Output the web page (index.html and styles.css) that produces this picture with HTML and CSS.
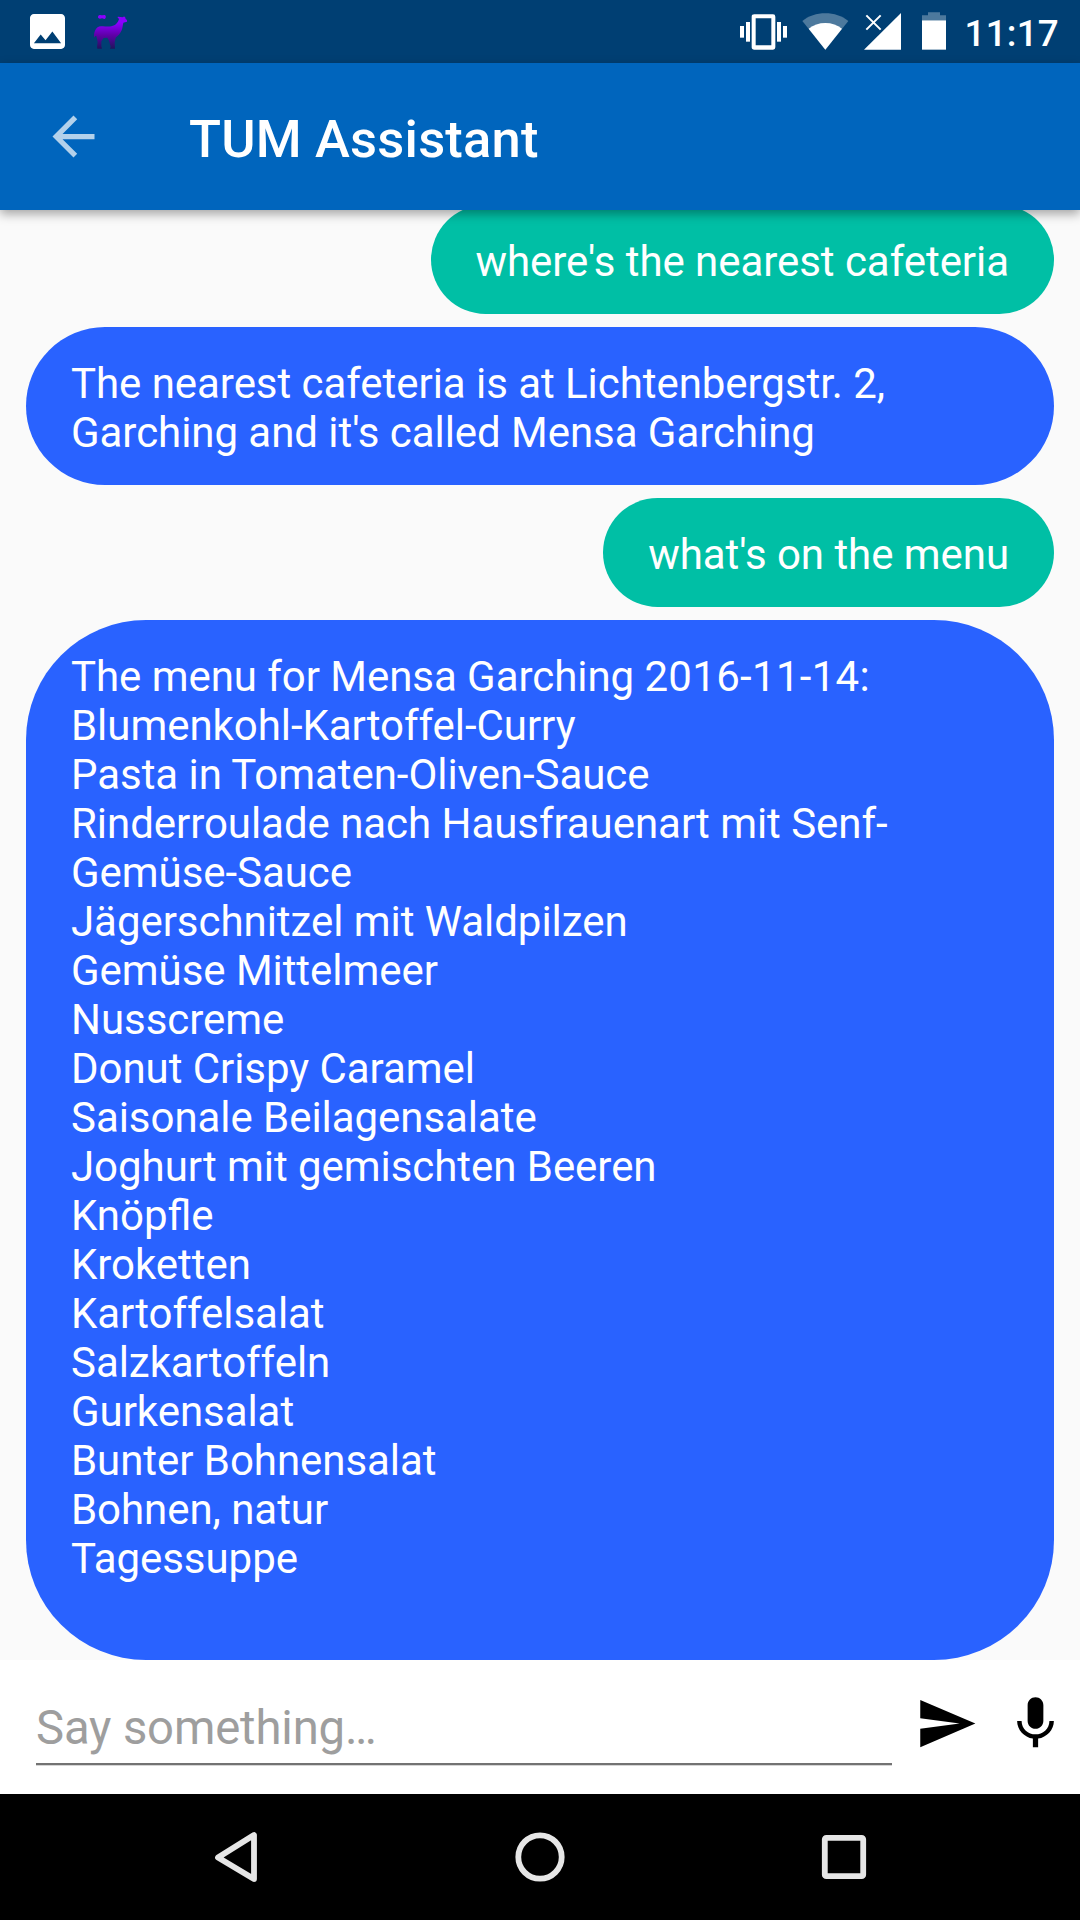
FILE: index.html
```html
<!DOCTYPE html>
<html lang="en">
<head>
    <meta charset="UTF-8">
    <title>TUM Assistant</title>
    <link rel="stylesheet" href="styles.css">
</head>
<body>
    <div class="status-bar">
        <div class="notifications">
            <svg width="35" height="35" viewBox="3 3 18 18" fill="#fff"><path d="M21 19V5c0-1.1-.9-2-2-2H5c-1.1 0-2 .9-2 2v14c0 1.1.9 2 2 2h14c1.1 0 2-.9 2-2zM8.5 13.5l2.5 3.01L14.5 12l4.5 6H5l3.5-4.5z"/></svg>
            <svg width="36" height="36" viewBox="0 0 108 108">
                <defs>
                    <linearGradient id="llama" gradientUnits="userSpaceOnUse" x1="0" y1="0" x2="0" y2="106">
                        <stop offset="0.25" stop-color="#8b00ff"/>
                        <stop offset="0.6" stop-color="#5f00a8"/>
                        <stop offset="1" stop-color="#1c1558"/>
                    </linearGradient>
                </defs>
                <g fill="url(#llama)">
                    <path d="M20 3c3-1 5 1 7 1s4-2 8-1 5 9 1 11-6-1-9-1-6 2-10 0-2-9 3-10z"/>
                    <path d="M3 72C2 54 8 38 24 37c10-1 20 2 31 0 14-3 20-12 23-22l-5-6 3-1 13 2 2-2h5l2 7 4 3v5l-11 3c-2 8-2 15-5 23-4 10-12 18-18 22l-3 14 1 19H51l2-6-5-18-5-9-11 1-7 10 0 14 2 8H13l-1-6 2-14-4-18-4 1z"/>
                </g>
            </svg>
        </div>
        <div class="system-icons">
            <svg class="vibrate" width="47" height="36" viewBox="60 41 141 108" fill="#fff">
                <rect x="60" y="77" width="12" height="35"/>
                <rect x="78" y="65" width="12" height="59"/>
                <path fill-rule="evenodd" d="M103 42h56q7 0 7 7v92q0 7-7 7h-56q-8 0-8-7V49q0-7 8-7zm4 12v81h47V54z"/>
                <rect x="171" y="65" width="12" height="59"/>
                <rect x="189" y="77" width="12" height="35"/>
            </svg>
            <svg class="wifi" width="47" height="37" viewBox="245 38 141 111" fill="#fff">
                <path opacity=".3" d="M315 148L246 62C265 47 289 39 315 39s50 8 69 23z"/>
                <path d="M315 148L265 85c14-11 31-17 50-17s36 6 50 17z"/>
            </svg>
            <svg class="signal" width="37" height="37" viewBox="431 38 111 111">
                <path fill="#fff" d="M431 148L542 38v110z"/>
                <path fill="none" stroke="#fff" stroke-width="6" d="M438 45l43 43M481 45l-43 43"/>
            </svg>
            <svg class="battery" width="24" height="38" viewBox="606 36 72 114" fill="#fff">
                <path opacity=".3" d="M606 61V46h18V37h36v9h18v15z"/>
                <path d="M606 61h72v88h-72z"/>
            </svg>
            <span class="clock">11:17</span>
        </div>
    </div>

    <header class="app-bar">
        <svg class="back" width="63" height="63" viewBox="0 0 24 24" fill="#fff"><path d="M20 11H7.83l5.59-5.59L12 4l-8 8 8 8 1.41-1.41L7.83 13H20v-2z"/></svg>
        <h1>TUM Assistant</h1>
    </header>

    <main class="chat">
        <div class="bubble user">where's the nearest cafeteria</div>
        <div class="bubble assistant">The nearest cafeteria is at Lichtenbergstr. 2,
Garching and it's called Mensa Garching</div>
        <div class="bubble user">what's on the menu</div>
        <div class="bubble assistant">The menu for Mensa Garching <span class="date">2016-11-14:</span>
Blumenkohl-Kartoffel-Curry
Pasta in Tomaten-Oliven-Sauce
Rinderroulade nach Hausfrauenart mit Senf-
Gemüse-Sauce
Jägerschnitzel mit Waldpilzen
Gemüse Mittelmeer
Nusscreme
Donut Crispy Caramel
Saisonale Beilagensalate
Joghurt mit gemischten Beeren
Knöpfle
Kroketten
Kartoffelsalat
Salzkartoffeln
Gurkensalat
Bunter Bohnensalat
Bohnen, natur
Tagessuppe
<br></div>
    </main>

    <form class="composer">
        <input class="message" type="text" placeholder="Say something…">
        <svg class="send" width="63" height="63" viewBox="0 0 24 24"><path d="M2.01 21L23 12 2.01 3 2 10l15 2-15 2z"/></svg>
        <svg class="mic" width="63" height="63" viewBox="0 0 24 24"><path d="M12 14c1.66 0 2.99-1.34 2.99-3L15 5c0-1.66-1.34-3-3-3S9 3.34 9 5v6c0 1.66 1.34 3 3 3zm5.3-3c0 3-2.54 5.1-5.3 5.1S6.7 14 6.7 11H5c0 3.41 2.72 6.23 6 6.72V21h2v-3.28c3.28-.48 6-3.3 6-6.72h-1.7z"/></svg>
    </form>

    <nav class="nav-bar">
        <svg width="42" height="50" viewBox="0 0 42 50"><path d="M3 25.500L39 3v44z" stroke-linejoin="round"/></svg>
        <svg width="50" height="50" viewBox="0 0 50 50"><circle cx="25" cy="25" r="21.700"/></svg>
        <svg width="44" height="50" viewBox="1 0 44 50"><rect x="2.800" y="5.800" width="38.400" height="38.400" rx="1.500"/></svg>
    </nav>
</body>
</html>
```
FILE: styles.css
```css
* {
    box-sizing: border-box;
}
body {
    margin: 0;
    width: 1080px;
    height: 1920px;
    display: flex;
    flex-direction: column;
    overflow: hidden;
    font-family: Roboto, sans-serif;
    background: #fafafa;
}
svg {
    display: block;
    flex: none;
    overflow: visible;
}

/* status bar */
.status-bar {
    flex: none;
    height: 63px;
    padding: 0 21px 0 30px;
    display: flex;
    justify-content: space-between;
    background: #003f73;
    color: #fff;
}
.notifications {
    display: flex;
    gap: 28px;
    padding-top: 14px;
}
.system-icons {
    display: flex;
    align-items: flex-start;
    padding-top: 13px;
}
.vibrate { margin: 1px 15px 0 0; }
.wifi { margin-right: 15px; }
.signal { margin-right: 21px; }
.battery { margin: -1px 19px 0 0; }
.clock {
    font-size: 36.75px;
    font-weight: 500;
    line-height: 42px;
    letter-spacing: 0.25px;
}

/* app bar */
.app-bar {
    flex: none;
    height: 147px;
    padding-left: 42px;
    display: flex;
    align-items: center;
    background: #0065bd;
    box-shadow: 0 4px 10px rgba(0, 0, 0, 0.35);
    z-index: 1;
}
.back {
    opacity: 0.7;
    margin-right: 84px;
}
h1 {
    margin: 4px 0 0;
    color: #fff;
    font-size: 52.5px;
    font-weight: 500;
    letter-spacing: 0.2px;
}

/* messages */
.chat {
    height: 1450px;
    flex: none;
    padding: 0 26px;
    display: flex;
    flex-direction: column;
    justify-content: flex-end;
    gap: 13px;
    overflow: hidden;
}
.bubble {
    flex: none;
    padding: 32px 45px 28px;
    border-radius: 120px;
    color: #fff;
    font-size: 42px;
    line-height: 49px;
    letter-spacing: -0.05px;
    /* letter-spacing turns ligatures off, keep them */
    font-feature-settings: "liga" 1;
    white-space: pre-line;
}
.user {
    align-self: flex-end;
    background: #00bfa5;
}
.assistant {
    background: #2962ff;
}
.date {
    letter-spacing: 0.3px;
}

/* input row */
.composer {
    flex: none;
    height: 134px;
    padding: 26px 13px 0 36px;
    display: flex;
    align-items: flex-start;
    background: #fff;
}
.message {
    width: 856px;
    height: 79px;
    padding: 6px 0 0;
    border: none;
    border-bottom: 2px solid #737373;
    box-shadow: 0 1px #d5d5d5;
    background: none;
    outline: none;
    font-family: inherit;
    font-size: 47.25px;
    letter-spacing: -0.15px;
}
.message::placeholder {
    color: #9e9e9e;
    opacity: 1;
}
.send { margin: 6px 26px 0 23px; }
.mic { margin-top: 6px; }

/* navigation bar */
.nav-bar {
    flex: none;
    height: 126px;
    padding: 38px 0 0 215px;
    display: flex;
    align-items: flex-start;
    gap: 258px;
    background: #000;
    fill: none;
    stroke: #e6e6e6;
    stroke-width: 5.8px;
}
```
